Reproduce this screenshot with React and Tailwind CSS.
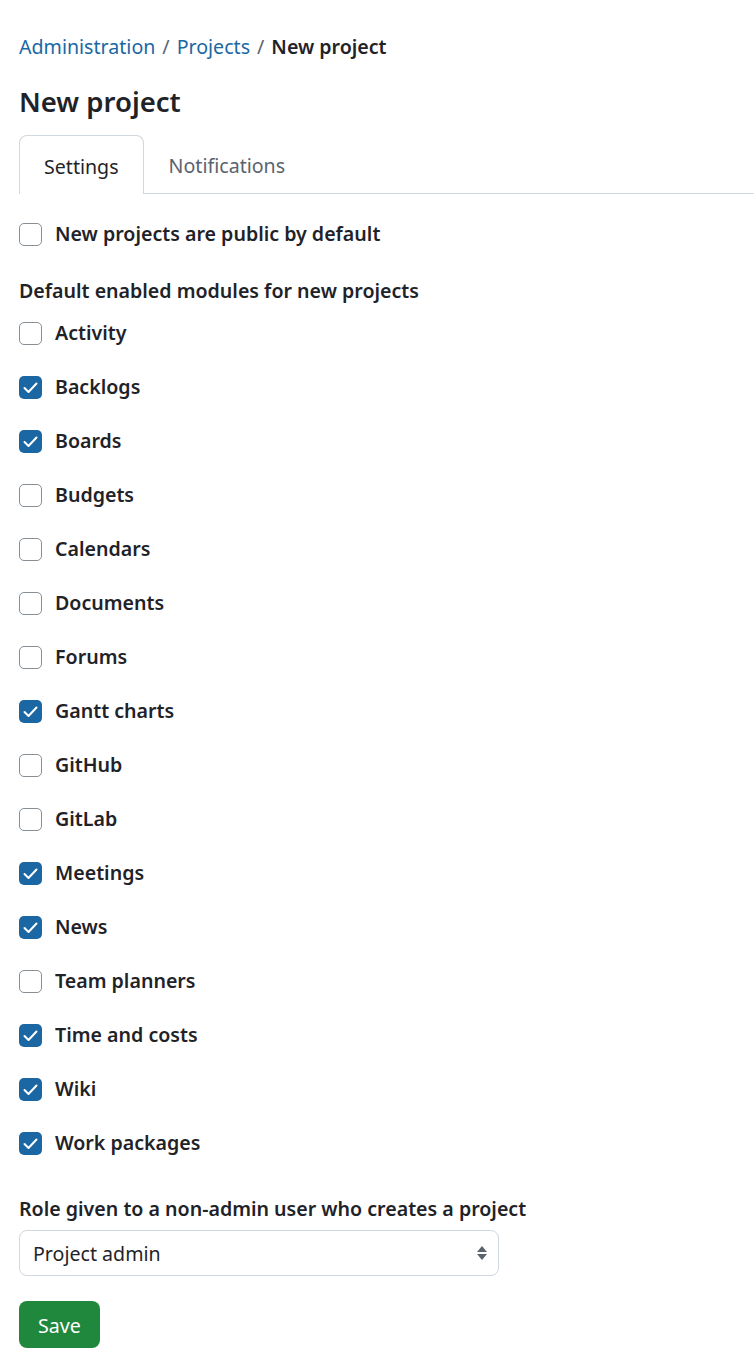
import React from "react";

const modules = [
  ["Activity", false],
  ["Backlogs", true],
  ["Boards", true],
  ["Budgets", false],
  ["Calendars", false],
  ["Documents", false],
  ["Forums", false],
  ["Gantt charts", true],
  ["GitHub", false],
  ["GitLab", false],
  ["Meetings", true],
  ["News", true],
  ["Team planners", false],
  ["Time and costs", true],
  ["Wiki", true],
  ["Work packages", true],
];

function Box({ checked }) {
  return checked ? (
    <span className="w-[23px] h-[23px] rounded-[5px] bg-[#1a67a3] flex items-center justify-center shrink-0">
      <svg width="17" height="17" viewBox="0 0 17 17" fill="none">
        <path d="M2.5 9l4 4L14.5 4.5" stroke="white" strokeWidth="2" strokeLinecap="round" strokeLinejoin="round" />
      </svg>
    </span>
  ) : (
    <span className="w-[23px] h-[23px] rounded-[5px] border border-[#868e96] bg-white shrink-0" />
  );
}

export default function App() {
  return (
    <div className="min-h-[1362px] bg-white text-[#1f2328] text-[19.6px] font-['Noto_Sans','Open_Sans',sans-serif]">
      <div className="pl-[19px]">
        <div className="pt-[32px] h-[62px] leading-[30px] flex items-center gap-[7px]">
          <span className="text-[#1a67a3]">Administration</span>
          <span className="text-[#59636e]">/</span>
          <span className="text-[#1a67a3]">Projects</span>
          <span className="text-[#59636e]">/</span>
          <span className="font-semibold">New project</span>
        </div>
        <h1 className="mt-[20px] h-[40px] leading-[40px] text-[27.5px] font-semibold">New project</h1>
        <div className="mt-[13px] h-[59px] border-b border-[#d0d7de] flex">
          <div className="h-[59px] px-[24px] pt-[3px] border border-b-0 border-[#d0d7de] rounded-t-[8px] bg-white flex items-center">
            Settings
          </div>
          <div className="h-[58px] px-[25px] pt-[4px] flex items-center text-[#59636e]">Notifications</div>
        </div>
        <div className="mt-[28px] h-[24px] flex items-center gap-[13px] font-semibold">
          <Box checked={false} />
          <span>New projects are public by default</span>
        </div>
        <div className="mt-[30px] h-[30px] leading-[30px] font-semibold">Default enabled modules for new projects</div>
        <div className="flex flex-col">
          {modules.map(([name, c]) => (
            <div key={name} className="h-[54px] flex items-center gap-[13px] font-semibold">
              <Box checked={c} />
              <span>{name}</span>
            </div>
          ))}
        </div>
        <div className="mt-[24px] h-[30px] leading-[30px] font-semibold">Role given to a non-admin user who creates a project</div>
        <div className="mt-[6px] w-[480px] h-[46px] border border-[#d0d7de] rounded-[8px] flex items-center justify-between pl-[13px] pr-[10px]">
          <span className="pt-[2px]">Project admin</span>
          <svg width="12" height="18" viewBox="0 0 12 18">
            <path d="M6 2L11 8H1z" fill="#59636e" />
            <path d="M6 16L11 10H1z" fill="#59636e" />
          </svg>
        </div>
        <button className="mt-[25px] w-[81px] h-[47px] pt-[3px] rounded-[8px] bg-[#1f883d] text-white flex items-center justify-center">
          Save
        </button>
      </div>
    </div>
  );
}
